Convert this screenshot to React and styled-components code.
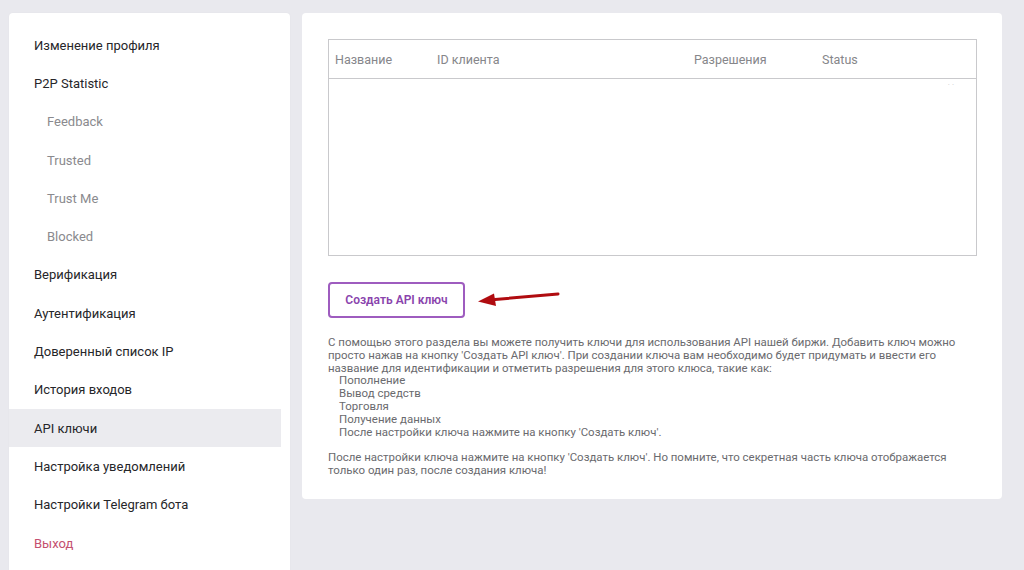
import React from "react";
import styled, { createGlobalStyle } from "styled-components";

const GlobalStyle = createGlobalStyle`
    html, body {
        margin: 0;
        padding: 0;
        background: #e9e9ee;
        font-family: Roboto, "Noto Sans", Arial, sans-serif;
    }
    * {
        box-sizing: border-box;
    }
`;

const Page = styled.div`
    display: flex;
    align-items: flex-start;
    gap: 12px;
    padding: 13px 22px 0 9px;
    height: 570px;
    overflow: hidden;
`;

const Sidebar = styled.nav`
    width: 281px;
    flex-shrink: 0;
    background: #fff;
    border-radius: 4px;
    padding: 13px 9px 20px 0;
    box-shadow: 0 0 2px rgba(0, 0, 0, 0.04);
`;

const MenuItem = styled.div`
    height: 38.3px;
    display: flex;
    align-items: center;
    padding-left: ${(props) => (props.sub ? "38px" : "25px")};
    font-size: 13px;
    color: ${(props) =>
        props.danger ? "#c4506f" : props.sub ? "#8a8a8e" : "#262629"};
    background: ${(props) => (props.active ? "#ebebef" : "transparent")};
`;

const Main = styled.section`
    flex: 1;
    background: #fff;
    border-radius: 4px;
    padding: 26px 25px 22px 26px;
`;

const Table = styled.div`
    border: 1px solid #c9c9cc;
    height: 217px;
    position: relative;
`;

const HeaderRow = styled.div`
    display: grid;
    grid-template-columns: 102px 257px 128px 1fr;
    height: 39px;
    align-items: center;
    padding-left: 6px;
    border-bottom: 1px solid #c9c9cc;
`;

const HeaderCell = styled.div`
    font-size: 12.5px;
    color: #86868a;
`;

const Dots = styled.span`
    position: absolute;
    top: 40px;
    right: 20px;
    font-size: 8px;
    color: #c8c8cc;
    letter-spacing: 2px;
`;

const ActionRow = styled.div`
    display: flex;
    align-items: center;
    gap: 12px;
    margin-top: 26px;
`;

const CreateButton = styled.button`
    width: 137px;
    height: 36px;
    border: 2px solid #9e5cbf;
    border-radius: 4px;
    background: #fff;
    color: #8a44ad;
    font-family: Roboto, "Noto Sans", Arial, sans-serif;
    font-size: 12px;
    font-weight: 600;
    cursor: pointer;
`;

const Description = styled.div`
    margin-top: 18px;
    font-size: 11.45px;
    line-height: 12.8px;
    color: #6a6a6e;
    padding-right: 8px;
`;

const List = styled.div`
    padding-left: 11px;
`;

const Spacer = styled.div`
    height: 12.8px;
`;

const Arrow = () => (
    <svg width="84" height="16" viewBox="0 0 84 16">
        <path d="M81 2 L18 7.5" stroke="#b00c10" strokeWidth="3" strokeLinecap="round" />
        <path d="M1 9.5 L17 1.5 L19 14 Z" fill="#b00c10" />
    </svg>
);

const menu = [
    { label: "Изменение профиля" },
    { label: "P2P Statistic" },
    { label: "Feedback", sub: true },
    { label: "Trusted", sub: true },
    { label: "Trust Me", sub: true },
    { label: "Blocked", sub: true },
    { label: "Верификация" },
    { label: "Аутентификация" },
    { label: "Доверенный список IP" },
    { label: "История входов" },
    { label: "API ключи", active: true },
    { label: "Настройка уведомлений" },
    { label: "Настройки Telegram бота" },
    { label: "Выход", danger: true },
];

const App = () => (
    <>
        <GlobalStyle />
        <Page>
            <Sidebar>
                {menu.map((item) => (
                    <MenuItem
                        key={item.label}
                        sub={item.sub}
                        active={item.active}
                        danger={item.danger}
                    >
                        {item.label}
                    </MenuItem>
                ))}
            </Sidebar>
            <Main>
                <Table>
                    <HeaderRow>
                        <HeaderCell>Название</HeaderCell>
                        <HeaderCell>ID клиента</HeaderCell>
                        <HeaderCell>Разрешения</HeaderCell>
                        <HeaderCell>Status</HeaderCell>
                    </HeaderRow>
                    <Dots>··</Dots>
                </Table>
                <ActionRow>
                    <CreateButton>Создать API ключ</CreateButton>
                    <Arrow />
                </ActionRow>
                <Description>
                    С помощью этого раздела вы можете получить ключи для
                    использования API нашей биржи. Добавить ключ можно просто
                    нажав на кнопку 'Создать API ключ'. При создании ключа вам
                    необходимо будет придумать и ввести его название для
                    идентификации и отметить разрешения для этого клюса, такие
                    как:
                    <List>
                        <div>Пополнение</div>
                        <div>Вывод средств</div>
                        <div>Торговля</div>
                        <div>Получение данных</div>
                        <div>После настройки ключа нажмите на кнопку 'Создать ключ'.</div>
                    </List>
                    <Spacer />
                    После настройки ключа нажмите на кнопку 'Создать ключ'. Но
                    помните, что секретная часть ключа отображается только один
                    раз, после создания ключа!
                </Description>
            </Main>
        </Page>
    </>
);

export default App;
